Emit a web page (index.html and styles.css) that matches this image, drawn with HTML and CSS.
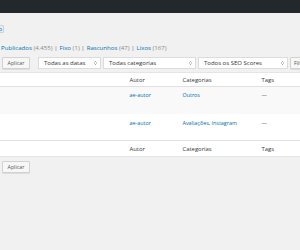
FILE: index.html
```html
<!DOCTYPE html>
<html lang="pt-BR">
<head>
<meta charset="utf-8">
<link rel="stylesheet" href="styles.css">
</head>
<body>
<div class="adminbar"></div>
<div class="wrap">
  <div class="title-row"><a class="page-title-action">Adicionar novo</a></div>
  <ul class="subsubsub">
    <li><a>Publicados <span class="count">(4.455)</span></a> |</li>
    <li><a>Fixo <span class="count">(1)</span></a> |</li>
    <li><a>Rascunhos <span class="count">(47)</span></a> |</li>
    <li><a>Lixos <span class="count">(167)</span></a></li>
  </ul>
  <div class="tablenav top">
    <span class="button">Aplicar</span>
    <div class="filters">
      <div class="select s-dates">Todas as datas<svg class="arrows" viewBox="0 0 6 10"><path d="M1 4 L3 2 L5 4 M1 6 L3 8 L5 6" fill="none" stroke="#555" stroke-width="1.2"/></svg></div>
      <div class="select s-cats">Todas categorias<svg class="arrows" viewBox="0 0 6 10"><path d="M1 4 L3 2 L5 4 M1 6 L3 8 L5 6" fill="none" stroke="#555" stroke-width="1.2"/></svg></div>
      <div class="select s-seo">Todos os SEO Scores<svg class="arrows" viewBox="0 0 6 10"><path d="M1 4 L3 2 L5 4 M1 6 L3 8 L5 6" fill="none" stroke="#555" stroke-width="1.2"/></svg></div>
      <span class="button">Filtrar</span>
    </div>
  </div>
  <table class="posts">
    <colgroup>
      <col class="c-title"><col class="c-author"><col class="c-cats"><col class="c-tags"><col class="c-rest">
    </colgroup>
    <thead>
      <tr><th></th><th>Autor</th><th>Categorias</th><th>Tags</th><th></th></tr>
    </thead>
    <tbody>
      <tr class="alt"><td class="title"></td><td><a>ae-autor</a></td><td><a>Outros</a></td><td class="dash">—</td><td></td></tr>
      <tr><td class="title"><a class="title-link">Avaliação de produto</a></td><td><a>ae-autor</a></td><td><a>Avaliações</a>, <a>Instagram</a></td><td class="dash">—</td><td></td></tr>
    </tbody>
    <tfoot>
      <tr><th></th><th>Autor</th><th>Categorias</th><th>Tags</th><th></th></tr>
    </tfoot>
  </table>
  <div class="tablenav bottom">
    <span class="button">Aplicar</span>
  </div>
</div>
</body>
</html>
```

FILE: styles.css
```css
html, body {
  margin: 0;
  padding: 0;
}
body {
  background: #f1f1f1;
  font-family: "Open Sans", "Noto Sans", sans-serif;
  color: #444;
  width: 300px;
  height: 250px;
  overflow: hidden;
}
a {
  color: #0073aa;
  text-decoration: none;
}
.adminbar {
  height: 13px;
  background: #23282d;
}
.wrap {
  display: flex;
  flex-direction: column;
}
.title-row {
  height: 8px;
  margin-top: 12px;
  display: flex;
}
.page-title-action {
  margin-left: -41px;
  height: 8px;
  box-sizing: border-box;
  padding: 0 1px 0 3px;
  border: 1px solid #ccd3db;
  border-radius: 1px;
  background: #e9edf1;
  font-size: 5.6px;
  line-height: 6px;
  white-space: nowrap;
  flex: none;
}
.subsubsub {
  list-style: none;
  margin: 11px 0 0 1px;
  padding: 0;
  display: flex;
  font-size: 6.1px;
  line-height: 8px;
  color: #666;
  white-space: nowrap;
}
.subsubsub li {
  margin-right: 2px;
}
.subsubsub .count {
  color: #888;
}
.tablenav {
  display: flex;
  align-items: center;
  height: 12px;
  white-space: nowrap;
}
.tablenav.top {
  margin-top: 5px;
}
.tablenav.bottom {
  margin-top: 4px;
}
.button {
  box-sizing: border-box;
  height: 12px;
  margin-left: 2px;
  width: 28px;
  border: 1px solid #d2d2d2;
  border-radius: 1px;
  background: #f7f7f7;
  color: #555;
  font-size: 5.3px;
  line-height: 10px;
  text-align: center;
  box-shadow: 0 1px 0 #ddd;
  flex: none;
}
.filters {
  display: flex;
  align-items: center;
  margin-left: 8px;
  gap: 2px;
}
.filters .button {
  margin-left: 0;
  width: 24px;
  text-align: left;
  padding-left: 3px;
}
.select {
  box-sizing: border-box;
  height: 12px;
  border: 1px solid #dcdcdc;
  background: #fff;
  color: #333;
  font-size: 6px;
  line-height: 10px;
  padding-left: 5px;
  display: flex;
  align-items: center;
  justify-content: space-between;
  padding-right: 3px;
  flex: none;
}
.s-dates { width: 63px; }
.s-cats { width: 93px; }
.s-seo { width: 90px; }
.arrows {
  width: 3px;
  height: 6px;
}
.posts {
  margin-top: 3px;
  margin-left: -1px;
  border-collapse: collapse;
  table-layout: fixed;
  width: 360px;
  background: #fff;
  border: 1px solid #e5e5e5;
  font-size: 5.4px;
}
.c-title { width: 125px; }
.c-author { width: 53px; }
.c-cats { width: 79px; }
.c-tags { width: 40px; }
.c-rest { width: 63px; }
.posts th {
  font-weight: normal;
  text-align: left;
  color: #32373c;
  font-size: 5.9px;
  height: 13px;
  padding: 0 0 0 5px;
  line-height: 8px;
}
.posts thead th {
  border-bottom: 1px solid #e1e1e1;
}
.posts tfoot th {
  border-top: 1px solid #e1e1e1;
  height: 15px;
}
.posts td {
  padding: 0 0 0 5px;
  height: 27px;
  vertical-align: top;
  padding-top: 4px;
  box-sizing: border-box;
  line-height: 8px;
  white-space: nowrap;
}
.posts tbody tr:last-child td {
  padding-top: 5px;
}
.posts tr.alt td {
  background: #f9f9f9;
}
.posts td.title {
  padding-left: 0;
  overflow: hidden;
}
.title-link {
  display: inline-block;
  margin-left: -60px;
  font-weight: 600;
  font-size: 5.6px;
}
.dash {
  color: #555;
}
```
